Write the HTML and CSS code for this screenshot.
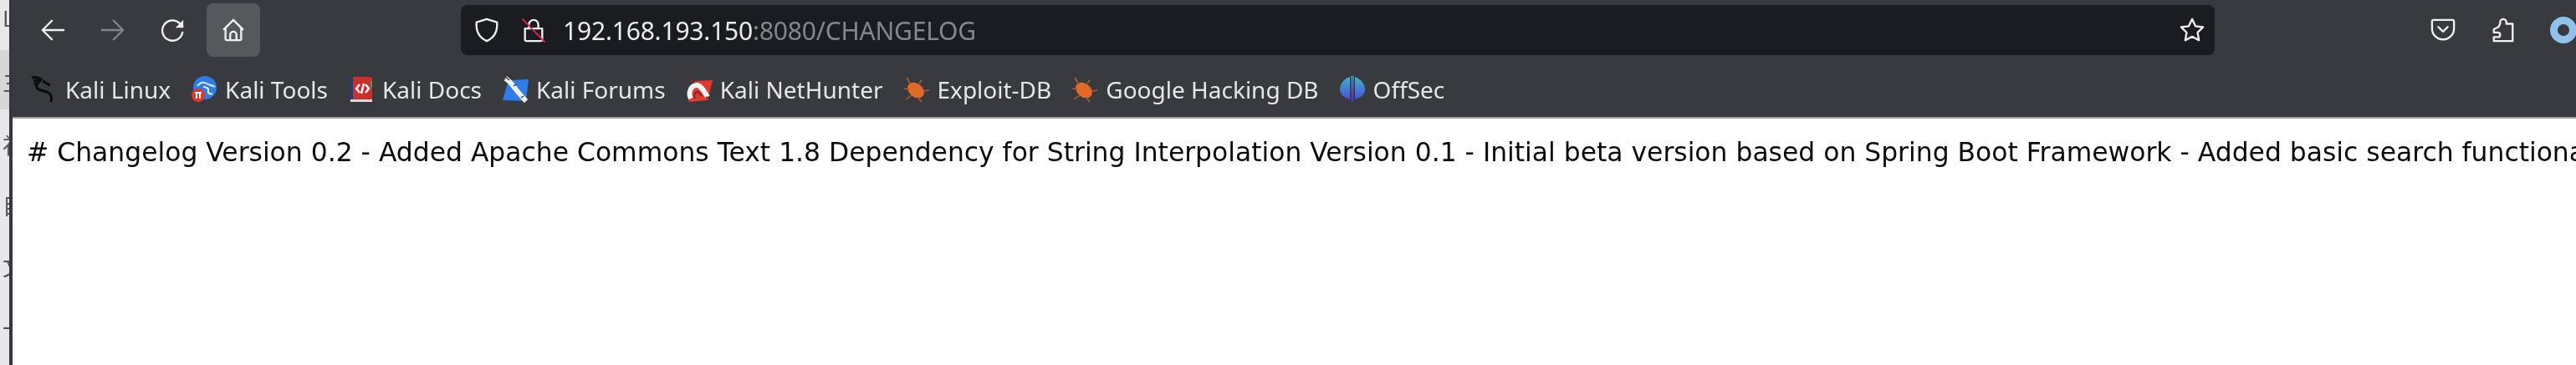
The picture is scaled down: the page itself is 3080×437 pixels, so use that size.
FILE: index.html
```html
<!DOCTYPE html>
<html lang="en">
<head>
  <meta charset="UTF-8" />
  <title>CHANGELOG</title>
  <link rel="stylesheet" href="styles.css">
</head>
<body>
  <div class="app">
    <div class="strip">
      <span class="strip-item first">L</span>
      <span class="strip-item active">三</span>
      <span class="strip-item">补</span>
      <span class="strip-item">目</span>
      <span class="strip-item">文</span>
      <span class="strip-item">一</span>
    </div>
    <div class="browser">
      <div class="toolbar">
        <div class="nav">
          <div class="btn">
            <svg class="icon" viewBox="0 0 32 32"><path d="M30 16H3M15 4L3 16l12 12"/></svg>
          </div>
          <div class="btn">
            <svg class="icon dim" viewBox="0 0 32 32"><path d="M2 16h27M17 4l12 12-12 12"/></svg>
          </div>
          <div class="btn">
            <svg class="icon" viewBox="0 0 32 32"><path d="M28 19a13 13 0 1 1-4-12l4 4"/><path class="solid" d="M29 3v10H19z"/></svg>
          </div>
          <div class="btn active">
            <svg class="icon" viewBox="0 0 32 32"><path d="M4 15L16 3l12 12M6 13v14a2 2 0 0 0 2 2h16a2 2 0 0 0 2-2V13M12 29v-7a4 4 0 0 1 8 0v7"/></svg>
          </div>
        </div>
        <div class="urlbar">
          <svg class="icon" viewBox="0 0 32 32"><path d="M16 2l13 4c1 11-2 19-13 24C5 25 2 17 3 6z"/></svg>
          <span class="lock">
            <svg class="icon" viewBox="0 0 32 32"><path d="M10 14V9a6 6 0 0 1 12 0v5M5 14h22v14a2 2 0 0 1-2 2H7a2 2 0 0 1-2-2z"/><path class="slash" d="M2 2l28 29"/></svg>
          </span>
          <span class="url">192.168.193.150<span class="url-rest">:8080/CHANGELOG</span></span>
          <svg class="icon star" viewBox="0 0 32 32"><path d="M16 2l4.300 9 9.700 1.300-7 6.800 1.700 9.900-8.700-4.700-8.700 4.700L9 19.100l-7-6.800L11.700 11z"/></svg>
        </div>
        <div class="actions">
          <div class="btn">
            <svg class="icon" viewBox="0 0 32 32"><path d="M4 3h24a2 2 0 0 1 2 2v9a14 14 0 0 1-28 0V5a2 2 0 0 1 2-2zM10 12l6 6 6-6"/></svg>
          </div>
          <div class="btn">
            <svg class="icon" viewBox="0 0 32 32"><path d="M12 8V6a4 4 0 0 1 8 0v2h8v22H4v-5h5a3 3 0 0 0 0-6H4v-4l6-3z"/></svg>
          </div>
          <div class="btn">
            <div class="ring"></div>
          </div>
        </div>
      </div>

      <div class="bookmarks">
        <a class="bookmark">
          <svg class="favicon" viewBox="0 0 32 32">
            <path class="dragon" d="M1 2c5-1 9 0 12 3M3 6c3-1 6-1 8 0M12 5C8 8 6 11 7 14c2 4 9 3 14 6 4 3 4 7 3 11M14 6c3 1 5 4 9 5M4 10l3-2"/>
          </svg>
          Kali Linux
        </a>
        <a class="bookmark">
          <svg class="favicon" viewBox="0 0 32 32">
            <circle cx="17" cy="14" r="14" fill="#2f7de1"/>
            <path d="M8 12c4-5 8-5 11-3s7 2 10 4M15 13c4 0 7 2 6 5s3 4 5 3" fill="none" stroke="#dfeafa" stroke-width="2"/>
            <circle cx="9" cy="23" r="8" fill="#e0352b"/>
            <path d="M7 20v7M11 20v7M5 20h8" fill="none" stroke="#fff" stroke-width="2"/>
          </svg>
          Kali Tools
        </a>
        <a class="bookmark">
          <svg class="favicon" viewBox="0 0 32 32">
            <path d="M3 2h5v27H3z" fill="#1d3a7a"/>
            <path d="M6 1h21l2 2v25H6z" fill="#c9302c"/>
            <path d="M27 6h2v8h-2z" fill="#4a9a5a"/>
            <path d="M3 28h26v3H3z" fill="#d9d9d9"/>
            <path d="M14 10l-4 5 4 5M21 10l4 5-4 5M19 9l-3 12" fill="none" stroke="#fff" stroke-width="2.500"/>
          </svg>
          Kali Docs
        </a>
        <a class="bookmark">
          <svg class="favicon" viewBox="0 0 32 32">
            <path d="M8 5l24-1-3 26-28-1z" fill="#2f7de8"/>
            <path d="M4 3c5 2 8 7 12 12s8 10 13 15" fill="none" stroke="#f2f2f2" stroke-width="6"/>
            <path d="M4 1l5 4M14 12l3-2M23 26l3-2" fill="none" stroke="#333" stroke-width="1.500"/>
          </svg>
          Kali Forums
        </a>
        <a class="bookmark">
          <svg class="favicon" viewBox="0 0 32 32">
            <path d="M11 6L32 5l-6 24L3 31z" fill="#e5392e"/>
            <path d="M6 27c-4-8 1-16 7-16 5 0 8 6 13 14" fill="none" stroke="#f4f4f4" stroke-width="6"/>
            <path d="M4 3l5 5M24 25l5 3M11 27c-2-4 0-8 3-8 2 0 3 2 5 5" fill="none" stroke="#7a2a2a" stroke-width="2"/>
          </svg>
          Kali NetHunter
        </a>
        <a class="bookmark">
          <svg class="favicon" viewBox="0 0 32 32">
            <ellipse cx="15" cy="17" rx="11" ry="8" transform="rotate(40 15 17)" fill="#e06a26"/>
            <path d="M4 2l5 8M1 15l6 1M3 28l7-5M24 18l7-1M17 25l5 6M19 9l3-4" fill="none" stroke="#b85c26" stroke-width="1.500"/>
          </svg>
          Exploit-DB
        </a>
        <a class="bookmark">
          <svg class="favicon" viewBox="0 0 32 32">
            <ellipse cx="15" cy="17" rx="11" ry="8" transform="rotate(40 15 17)" fill="#e06a26"/>
            <path d="M4 2l5 8M1 15l6 1M3 28l7-5M24 18l7-1M17 25l5 6M19 9l3-4" fill="none" stroke="#b85c26" stroke-width="1.500"/>
          </svg>
          Google Hacking DB
        </a>
        <a class="bookmark">
          <svg class="favicon" viewBox="0 0 32 32">
            <defs>
              <linearGradient id="off" x1="0" y1="0" x2="0" y2="1">
                <stop offset="0" stop-color="#3fb4c8"/>
                <stop offset="1" stop-color="#4a4fd8"/>
              </linearGradient>
              <linearGradient id="offbar" x1="0" y1="0" x2="0" y2="1">
                <stop offset="0" stop-color="#2f8f9f"/>
                <stop offset="1" stop-color="#6a25d8"/>
              </linearGradient>
            </defs>
            <path d="M13 1C5 4 1 10 1 16s4 9 12 12zM19 1c8 3 12 9 12 15s-4 9-12 12z" fill="url(#off)"/>
            <path d="M16 0h-2l1 31h2l1-31z" fill="url(#offbar)"/>
          </svg>
          OffSec
        </a>
      </div>

      <div class="page">
        <pre class="changelog"># Changelog Version 0.2 - Added Apache Commons Text 1.8 Dependency for String Interpolation Version 0.1 - Initial beta version based on Spring Boot Framework - Added basic search functionality</pre>
      </div>
    </div>
  </div>
</body>
</html>
```

FILE: styles.css
```css
* {
  box-sizing: border-box;
}

html, body {
  margin: 0;
  height: 100%;
  overflow: hidden;
  background: #fff;
}

/* the reference is an upscaled capture, everything in it is a bit soft */
.app {
  display: flex;
  height: 437px;
  filter: blur(0.6px);
}

/* window behind the browser, only a sliver shows */
.strip {
  width: 15px;
  flex: none;
  display: flex;
  flex-direction: column;
  overflow: hidden;
  background: #e8e8e8;
  border-right: 4px solid #36373c;
  font-family: "Noto Sans CJK SC", "Liberation Sans", sans-serif;
  font-size: 26px;
  color: #555;
}

.strip-item {
  height: 73px;
  flex: none;
  padding-left: 3px;
  line-height: 84px;
  white-space: nowrap;
}

.strip-item.first {
  height: 60px;
  line-height: 42px;
}

.strip-item.active {
  height: 71px;
  line-height: 78px;
  background: #d6d6d6;
}

.browser {
  flex: 1;
  min-width: 0;
  display: flex;
  flex-direction: column;
  overflow: hidden;
}

.toolbar {
  height: 71px;
  flex: none;
  display: flex;
  align-items: center;
  padding-left: 16px;
  background: #393a40;
}

.nav, .actions {
  display: flex;
  flex: none;
  gap: 8px;
}

.nav {
  margin-right: 240px;
}

.actions {
  margin-left: 241px;
  margin-right: -17px;
}

.btn {
  width: 64px;
  height: 64px;
  display: flex;
  align-items: center;
  justify-content: center;
  border-radius: 8px;
}

.btn.active {
  background: #57585d;
}

.icon {
  width: 30px;
  height: 32px;
  flex: none;
  fill: none;
  stroke: #f0f0f0;
  stroke-width: 2.500;
  stroke-linecap: round;
  stroke-linejoin: round;
}

.icon.dim {
  stroke: #85868a;
}

.icon .solid {
  fill: #f0f0f0;
  stroke: none;
}

.icon .slash {
  stroke: #e0294a;
  stroke-width: 2;
}

.ring {
  width: 32px;
  height: 32px;
  border: 9px solid #90c2ec;
  border-radius: 50%;
}

.urlbar {
  flex: 1;
  min-width: 0;
  height: 60px;
  display: flex;
  align-items: center;
  padding: 0 12px 0 16px;
  background: #1b1c21;
  border-radius: 8px;
}

.lock {
  margin-left: 26px;
  display: flex;
}

.url {
  flex: 1;
  margin-left: 20px;
  padding-top: 2px;
  font-family: "Noto Sans", sans-serif;
  font-size: 30px;
  letter-spacing: -0.2px;
  color: #ececec;
  white-space: nowrap;
}

.url-rest {
  color: #85868a;
}

.bookmarks {
  height: 71px;
  flex: none;
  display: flex;
  align-items: center;
  gap: 24px;
  padding: 3px 0 0 22px;
  background: #393a40;
  border-bottom: 2px solid #a0a1a5;
}

.bookmark {
  display: flex;
  align-items: center;
  gap: 9px;
  font-family: "Noto Sans", sans-serif;
  font-size: 28px;
  color: #e6e6e6;
  white-space: nowrap;
}

.favicon {
  width: 32px;
  height: 32px;
  flex: none;
}

.dragon {
  fill: none;
  stroke: #0b0b0b;
  stroke-width: 3;
}

.page {
  flex: 1;
  background: #fff;
  padding: 20px 17px;
  overflow: hidden;
}

.changelog {
  margin: 0;
  font-family: "DejaVu Sans", sans-serif;
  font-size: 31.4px;
  line-height: 40px;
  color: #0a0a0a;
  white-space: pre;
}
```
